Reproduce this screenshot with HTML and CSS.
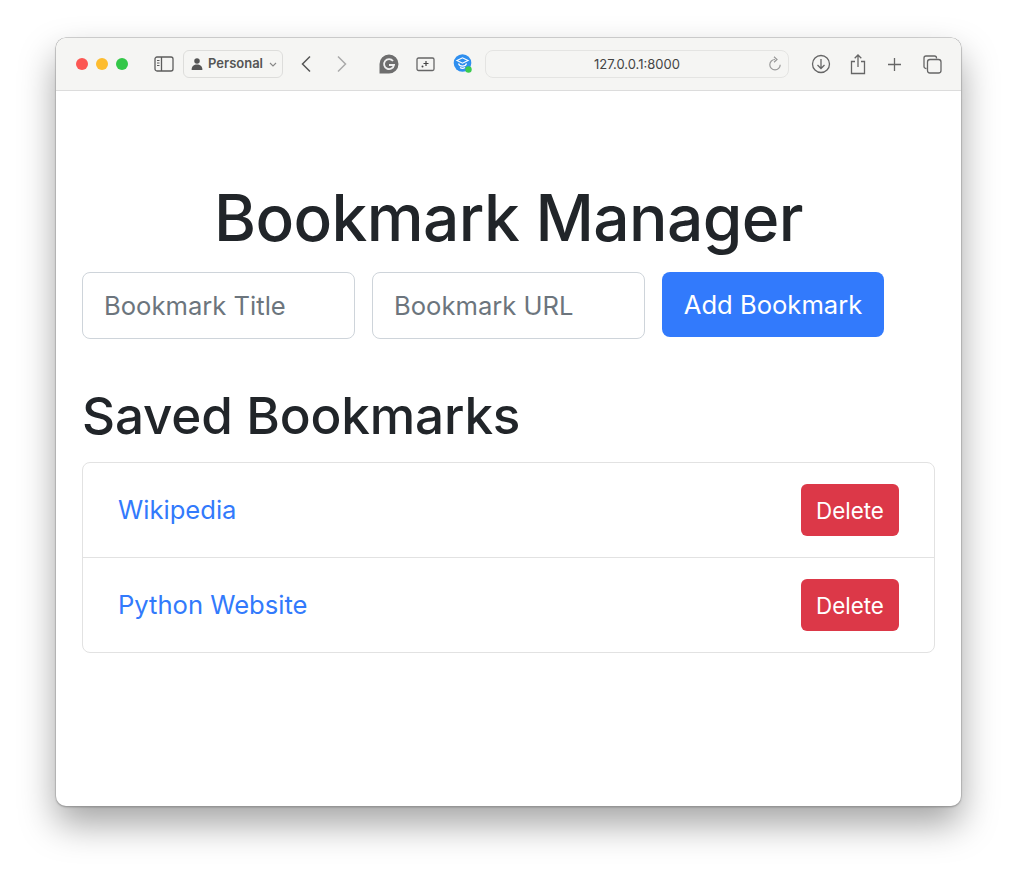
FILE: index.html
```html
<!DOCTYPE html>
<html lang="en">
<head>
  <meta charset="UTF-8" />
  <title>Bookmark Manager</title>
  <link rel="stylesheet" href="styles.css">
</head>
<body>

<div class="window">
  <div class="toolbar">
    <div class="lights">
      <span class="light red"></span>
      <span class="light yellow"></span>
      <span class="light green"></span>
    </div>
    <svg class="icon sidebar-icon" width="20" height="16" viewBox="0 0 20 16">
      <rect x="1" y="1" width="18" height="14" rx="2" fill="none" stroke="#5c5c5c" stroke-width="1.300"/>
      <path d="M7.500 1v14" stroke="#5c5c5c" stroke-width="1.300"/>
      <path d="M3 4.500h2.500M3 7h2.500M3 9.500h2.500" stroke="#5c5c5c" stroke-width="1"/>
    </svg>
    <div class="profile">
      <svg width="12" height="12" viewBox="0 0 10 10">
        <circle cx="5" cy="2.500" r="2.300" fill="#555"/>
        <path d="M0.500 10c0-3.200 2-4.500 4.500-4.500s4.500 1.300 4.500 4.500z" fill="#555"/>
      </svg>
      <span>Personal</span>
      <svg width="8" height="5" viewBox="0 0 8 5"><path d="M1 1l3 3 3-3" fill="none" stroke="#888" stroke-width="1.100"/></svg>
    </div>
    <svg class="nav-back" width="12" height="18" viewBox="0 0 12 18"><path d="M10 1.500L2.500 9l7.500 7.500" fill="none" stroke="#555" stroke-width="1.500"/></svg>
    <svg class="nav-forward" width="12" height="18" viewBox="0 0 12 18"><path d="M2 1.500L9.500 9 2 16.500" fill="none" stroke="#aaa" stroke-width="1.500"/></svg>
    <svg class="ext-g" width="20" height="20" viewBox="0 0 20 20">
      <path d="M10 0.500a9.500 9.500 0 1 1 0 19H0.500V10A9.500 9.500 0 0 1 10 0.500z" fill="#6e6e6e"/>
      <path d="M14 7a5 5 0 1 0 1 4H10" fill="none" stroke="#f0f0f0" stroke-width="1.800"/>
    </svg>
    <svg class="ext-shot" width="19" height="15" viewBox="0 0 19 15">
      <rect x="1" y="1" width="17" height="12.500" rx="1.500" fill="none" stroke="#666" stroke-width="1.300"/>
      <path d="M10 4v5M7.500 6.500h5" stroke="#444" stroke-width="1.200"/>
      <circle cx="6.500" cy="9.500" r="1" fill="#444"/>
    </svg>
    <svg class="ext-hat" width="20" height="20" viewBox="0 0 20 20">
      <circle cx="9.500" cy="9" r="8.800" fill="#2f8fef"/>
      <path d="M4 6.500L9.500 3.800l5.500 2.700-5.500 2.700z" fill="none" stroke="#fff" stroke-width="1.200"/>
      <path d="M5.500 9.500c1 3.500 7 3.500 8 0M7 13.500c1.500 1 3.500 1 5 0" fill="none" stroke="#fff" stroke-width="1.200"/>
      <circle cx="15.500" cy="15.500" r="3.200" fill="#3ccb4f"/>
    </svg>
    <div class="address">
      <span>127.0.0.1:8000</span>
      <svg class="reload" width="14" height="16" viewBox="0 0 14 16">
        <path d="M7 3.500a5.200 5.200 0 1 0 5.200 5.200" fill="none" stroke="#999" stroke-width="1.200"/>
        <path d="M6 0.800L9 3.500 6 6.200" fill="none" stroke="#999" stroke-width="1.200"/>
      </svg>
    </div>
    <svg class="tool-download" width="20" height="20" viewBox="0 0 20 20">
      <circle cx="10" cy="10" r="8.500" fill="none" stroke="#666" stroke-width="1.300"/>
      <path d="M10 5v9.500M6.500 11l3.500 3.500 3.500-3.500" fill="none" stroke="#666" stroke-width="1.300"/>
    </svg>
    <svg class="tool-share" width="16" height="21" viewBox="0 0 16 21">
      <path d="M5 7.500H1.500v12h13v-12H11M8 13V1.200M4.700 4.300L8 1l3.300 3.300" fill="none" stroke="#666" stroke-width="1.300"/>
    </svg>
    <svg class="tool-plus" width="15" height="15" viewBox="0 0 15 15"><path d="M7.500 1v13M1 7.500h13" stroke="#666" stroke-width="1.300"/></svg>
    <svg class="tool-tabs" width="19" height="19" viewBox="0 0 19 19">
      <path d="M3.500 13.500H3a2 2 0 0 1-2-2V3a2 2 0 0 1 2-2h8.500a2 2 0 0 1 2 2v.500" fill="none" stroke="#666" stroke-width="1.300"/>
      <rect x="4.500" y="4.500" width="13.500" height="13.500" rx="2.500" fill="none" stroke="#666" stroke-width="1.300"/>
    </svg>
  </div>

  <div class="page">
    <h1>Bookmark Manager</h1>
    <form class="add-form">
      <input type="text" placeholder="Bookmark Title">
      <input type="text" placeholder="Bookmark URL">
      <button type="button" class="btn-add">Add Bookmark</button>
    </form>
    <h2>Saved Bookmarks</h2>
    <ul class="bookmarks">
      <li>
        <a href="#">Wikipedia</a>
        <button type="button" class="btn-delete">Delete</button>
      </li>
      <li>
        <a href="#">Python Website</a>
        <button type="button" class="btn-delete">Delete</button>
      </li>
    </ul>
  </div>
</div>

</body>
</html>
```

FILE: styles.css
```css
* {
  box-sizing: border-box;
}

body {
  margin: 0;
  height: 880px;
  overflow: hidden;
  background: white;
  font-family: Inter, "Liberation Sans", sans-serif;
  color: #212529;
}

.window {
  width: 905px;
  height: 768px;
  margin: 38px 0 0 56px;
  background: white;
  border-radius: 10px;
  overflow: hidden;
  box-shadow: 0 0 0 0.5px #a8a8a8, 0 1px 2px rgba(0, 0, 0, 0.35), 0 18px 36px rgba(0, 0, 0, 0.36);
}

.toolbar {
  display: flex;
  align-items: center;
  height: 53px;
  background: #f5f5f3;
  border-bottom: 1px solid #dcdcdc;
  padding-left: 20px;
}

.lights {
  display: flex;
  gap: 8px;
}

.light {
  width: 12px;
  height: 12px;
  border-radius: 50%;
}

.red {
  background: #fc5753;
}

.yellow {
  background: #fdbc2e;
}

.green {
  background: #33c748;
}

.sidebar-icon {
  margin-left: 26px;
}

.profile {
  display: flex;
  align-items: center;
  width: 100px;
  height: 28px;
  margin-left: 9px;
  padding-left: 7px;
  border: 1.5px solid #dddddb;
  border-radius: 6px;
  font-size: 13px;
  font-weight: 600;
  color: #555;
}

.profile span {
  margin: 0 6px 2px 5px;
}

.nav-back {
  margin-left: 17px;
}

.nav-forward {
  margin-left: 24px;
}

.ext-g {
  margin-left: 31px;
}

.ext-shot {
  margin-left: 17px;
}

.ext-hat {
  margin-left: 18px;
}

.address {
  position: relative;
  width: 304px;
  height: 28px;
  margin-left: 12px;
  border: 1px solid #e4e4e2;
  border-radius: 8px;
  font-size: 13px;
  line-height: 26px;
  text-align: center;
  color: #444;
}

.reload {
  position: absolute;
  right: 6px;
  top: 5px;
}

.tool-download {
  margin-left: 22px;
}

.tool-share {
  margin-left: 19px;
}

.tool-plus {
  margin-left: 21px;
}

.tool-tabs {
  margin-left: 21px;
}

.page {
  padding: 0 26px;
}

h1 {
  margin: 0;
  padding-top: 89px;
  font-size: 64px;
  font-weight: 500;
  letter-spacing: -0.6px;
  line-height: 76px;
  text-align: center;
}

.add-form {
  display: flex;
  align-items: flex-start;
  gap: 17px;
  margin-top: 16px;
}

.add-form input {
  width: 273px;
  height: 67px;
  padding: 0 21px;
  border: 1px solid #ced4da;
  border-radius: 8px;
  font-family: inherit;
  font-size: 25.6px;
}

.add-form input::placeholder {
  color: #6c757d;
}

.btn-add {
  width: 222px;
  height: 65px;
  padding: 0;
  border: none;
  border-radius: 8px;
  background: #327afc;
  color: white;
  font-family: inherit;
  font-size: 25.6px;
}

h2 {
  margin: 46px 0 0;
  font-size: 51.2px;
  font-weight: 500;
  letter-spacing: -0.15px;
  line-height: 61px;
}

.bookmarks {
  list-style: none;
  margin: 16px 0 0;
  padding: 0;
  border: 1px solid #e2e2e2;
  border-radius: 8px;
}

.bookmarks li {
  display: flex;
  align-items: center;
  justify-content: space-between;
  height: 95px;
  padding: 0 35px;
  border-bottom: 1px solid #e2e2e2;
}

.bookmarks li:last-child {
  border-bottom: none;
  height: 94px;
}

.bookmarks a {
  margin-bottom: 2px;
  color: #327afc;
  font-size: 25.6px;
  text-decoration: none;
}

.btn-delete {
  width: 98px;
  height: 52px;
  border: none;
  border-radius: 6px;
  background: #dc3848;
  color: white;
  font-family: inherit;
  font-size: 22.4px;
}
```
